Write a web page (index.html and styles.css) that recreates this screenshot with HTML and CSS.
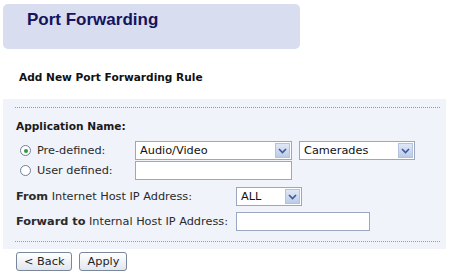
FILE: index.html
```html
<!DOCTYPE html>
<html>
<head>
<meta charset="utf-8">
<link rel="stylesheet" href="styles.css">
</head>
<body>
<div class="header"><h1 class="title">Port Forwarding</h1></div>
<h2 class="subtitle">Add New Port Forwarding Rule</h2>
<div class="panel">
  <div class="dots"></div>
  <div class="section-label">Application Name:</div>
  <div class="row">
    <span class="radio checked"></span><span class="rlabel">Pre-defined:</span>
    <div class="select w-av"><span class="val">Audio/Video</span><span class="arrow"><svg width="9" height="6" viewBox="0 0 9 6"><path d="M1 1l3.5 3.5L8 1" fill="none" stroke="#3a5a9a" stroke-width="1.6"/></svg></span></div>
    <div class="select w-cam"><span class="val">Camerades</span><span class="arrow"><svg width="9" height="6" viewBox="0 0 9 6"><path d="M1 1l3.5 3.5L8 1" fill="none" stroke="#3a5a9a" stroke-width="1.6"/></svg></span></div>
  </div>
  <div class="row row2">
    <span class="radio"></span><span class="rlabel">User defined:</span>
    <div class="input w-user"></div>
  </div>
  <div class="row row3">
    <span class="flabel"><b>From</b> Internet Host IP Address:</span>
    <div class="select w-all"><span class="val">ALL</span><span class="arrow"><svg width="9" height="6" viewBox="0 0 9 6"><path d="M1 1l3.5 3.5L8 1" fill="none" stroke="#3a5a9a" stroke-width="1.6"/></svg></span></div>
  </div>
  <div class="row row4">
    <span class="flabel"><b>Forward to</b> Internal Host IP Address:</span>
    <div class="input w-ip"></div>
  </div>
  <div class="dots dots-bottom"></div>
</div>
<div class="buttons">
  <button class="btn">&lt; Back</button>
  <button class="btn">Apply</button>
</div>
</body>
</html>
```
FILE: styles.css
```css
* { box-sizing: border-box; }
body {
  margin: 0;
  width: 450px;
  height: 277px;
  background: #ffffff;
  font-family: "DejaVu Sans", Verdana, sans-serif;
  font-size: 11.3px;
  color: #1a1a1a;
  overflow: hidden;
}
.header {
  margin: 4px 0 0 3px;
  width: 297px;
  height: 45px;
  background: #d9ddf0;
  border-radius: 5px;
  padding: 6px 0 0 24px;
}
.title {
  margin: 0;
  font-family: "Liberation Sans", Arial, sans-serif;
  font-weight: bold;
  font-size: 17px;
  color: #14145e;
}
.subtitle {
  margin: 22px 0 0 19px;
  font-size: 10.6px;
  font-weight: bold;
  color: #111;
  height: 13px;
  line-height: 13px;
}
.panel {
  margin: 15px 0 0 3px;
  width: 443px;
  height: 150px;
  background: #f0f3fa;
  padding: 8px 6px 0 12px;
}
.dots {
  height: 1px;
  border-top: 1px dotted #9a9a9a;
}
.section-label {
  margin-top: 12px;
  font-weight: bold;
  font-size: 10.6px;
  height: 13px;
  line-height: 13px;
  padding-left: 1px;
}
.row {
  display: flex;
  align-items: center;
  height: 19px;
  margin-top: 8px;
}
.row2 { margin-top: 1px; }
.row3 { margin-top: 7px; }
.row4 { margin-top: 6px; }
.radio {
  width: 11px;
  height: 11px;
  border: 1px solid #6f7f98;
  border-radius: 50%;
  background: #fff;
  margin-left: 5px;
  position: relative;
}
.radio.checked::after {
  content: "";
  position: absolute;
  left: 2.5px; top: 2.5px;
  width: 4px; height: 4px;
  border-radius: 50%;
  background: #2e9a3a;
}
.rlabel {
  margin-left: 6px;
  width: 98px;
  color: #2a2a2a;
}
.flabel {
  width: 221px;
  padding-left: 1px;
  color: #2a2a2a;
}
.select {
  height: 19px;
  border: 1px solid #9aa8bf;
  background: #fff;
  display: flex;
  align-items: center;
  justify-content: space-between;
  padding-left: 4px;
}
.select .val { color: #111; }
.arrow {
  width: 15px;
  height: 15px;
  margin-right: 1px;
  background: linear-gradient(#dfe8f7, #bccbe6);
  border: 1px solid #b3c3df;
  display: flex;
  align-items: center;
  justify-content: center;
}
.w-av { width: 157px; }
.w-cam { width: 116px; margin-left: 7px; }
.w-all { width: 66px; }
.input {
  height: 19px;
  border: 1px solid #9aa8bf;
  background: #fff;
}
.w-user { width: 157px; }
.w-ip { width: 134px; }
.dots-bottom { margin-top: 10px; }
.buttons {
  display: flex;
  gap: 7px;
  margin: 3px 0 0 16px;
}
.btn {
  font-family: "DejaVu Sans", Verdana, sans-serif;
  font-size: 11.3px;
  height: 19px;
  padding: 0 7px;
  border: 1px solid #7a8699;
  border-radius: 3px;
  background: linear-gradient(#ffffff, #e2e6ee);
  color: #222;
}
```
